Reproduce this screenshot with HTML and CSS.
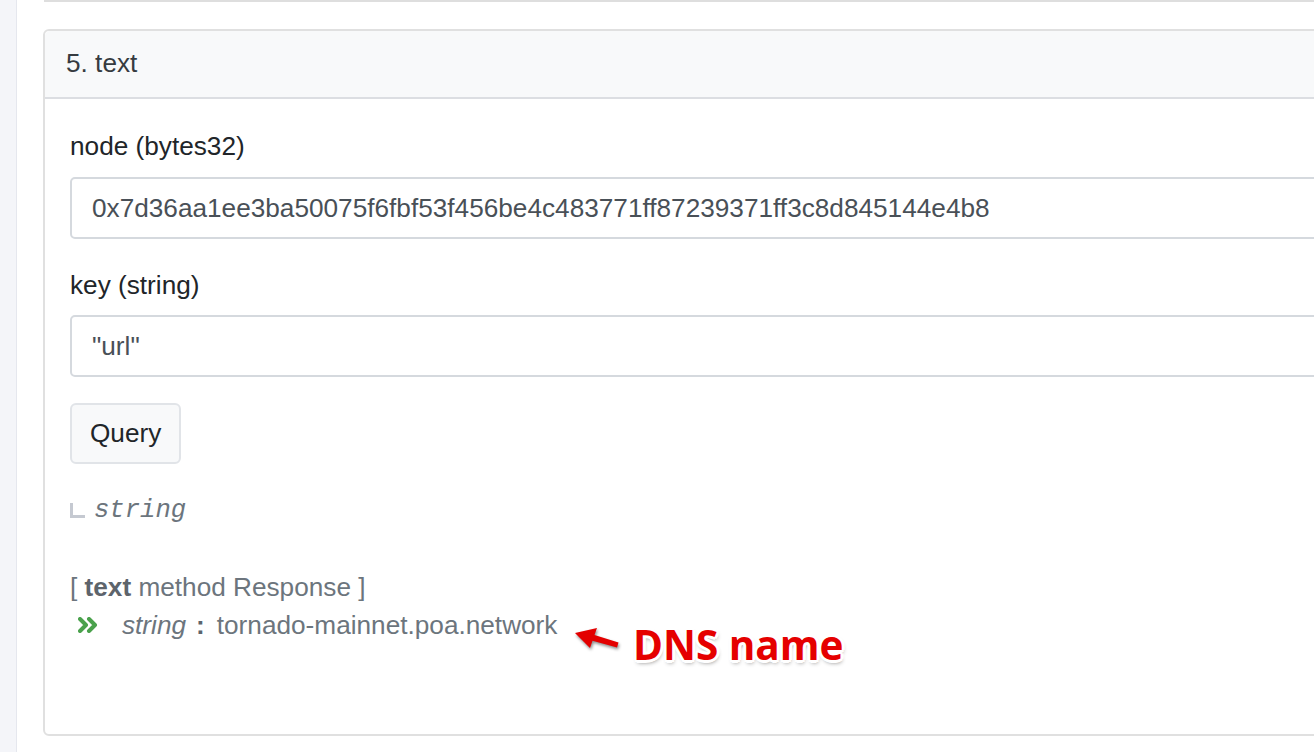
FILE: index.html
```html
<!DOCTYPE html>
<html lang="en">
<head>
<meta charset="utf-8">
<title>text</title>
<link rel="stylesheet" href="styles.css">
</head>
<body>
<div class="page">
  <aside class="side"></aside>
  <main class="main">
    <div class="prev-card"></div>
    <section class="card">
      <header class="card-head">5. text</header>
      <div class="card-body">
        <div class="group">
          <label class="lbl">node (bytes32)</label>
          <div class="input">0x7d36aa1ee3ba50075f6fbf53f456be4c483771ff87239371ff3c8d845144e4b8</div>
        </div>
        <div class="group">
          <label class="lbl">key (string)</label>
          <div class="input">"url"</div>
        </div>
        <button class="btn">Query</button>
        <div class="ret"><span class="ell"></span><i class="mono">string</i></div>
        <div class="resp">
          <div class="resp-title">[ <b>text</b> method Response ]</div>
          <div class="resp-line">
            <svg class="chev" width="22" height="16" viewBox="0 0 22 16"><path d="M2 2 L8 8 L2 14 M11 2 L17 8 L11 14" fill="none" stroke="#4aa14c" stroke-width="4" stroke-linecap="round" stroke-linejoin="round"/></svg>
            <i class="rtype">string</i><b class="colon">:</b><span class="rval">tornado-mainnet.poa.network</span>
          </div>
        </div>
      </div>
    </section>
  </main>
  <svg class="arrow" width="60" height="40" viewBox="0 0 60 40"><polygon points="4,13 26,8 23.5,15 47.5,22.5 46,27.5 21.5,20.8 19,28" fill="#e30000"/></svg>
  <span class="note">DNS name</span>
</div>
</body>
</html>
```

FILE: styles.css
```css
html, body {
  margin: 0;
  padding: 0;
  background: #ffffff;
  overflow: hidden;
}
.page {
  position: relative;
  display: flex;
  width: 1314px;
  height: 752px;
  overflow: hidden;
  font-family: "Liberation Sans", Arial, sans-serif;
  font-size: 26.2px;
  line-height: 38.4px;
  color: #212529;
}
.side {
  flex: 0 0 16px;
  background: #f4f5f9;
  border-right: 1px solid #e5e7ee;
}
.main {
  flex: 1 1 auto;
  padding-left: 26px;
  min-width: 0;
}
.prev-card {
  width: 1400px;
  height: 0;
  margin-left: 1px;
  border-bottom: 2px solid #dedede;
}
.card {
  width: 1400px;
  margin-top: 27px;
  border: 2px solid #e0e0e0;
  border-radius: 6px;
  background: #fff;
}
.card-head {
  padding: 13px 21px 15px;
  background: #f8f9fa;
  border-bottom: 2px solid #dcdee2;
  border-radius: 5px 5px 0 0;
  color: #363b40;
}
.card-body {
  padding: 28px 25px 90px;
}
.group {
  margin-bottom: 27px;
}
.lbl {
  display: block;
  margin-bottom: 11px;
  color: #212529;
}
.input {
  box-sizing: border-box;
  height: 62px;
  padding: 10px 20px;
  border: 2px solid #d5d9de;
  border-radius: 5px;
  color: #495057;
  white-space: nowrap;
}
.btn {
  display: block;
  box-sizing: border-box;
  height: 61px;
  padding: 0 18px;
  margin: -1px 0 0;
  background: #f8f9fa;
  border: 2px solid #e1e4e8;
  border-radius: 6px;
  font-family: inherit;
  font-size: 26.2px;
  color: #212529;
}
.ret {
  display: flex;
  align-items: center;
  margin-top: 28px;
  height: 38.4px;
}
.ell {
  display: inline-block;
  width: 12px;
  height: 12px;
  margin-right: 9px;
  margin-top: -1px;
  border-left: 3px solid #c5c9d1;
  border-bottom: 3px solid #c5c9d1;
}
.mono {
  font-family: "Liberation Mono", "DejaVu Sans Mono", monospace;
  font-style: italic;
  font-size: 25.6px;
  color: #6c757d;
}
.resp {
  margin-top: 37px;
  color: #6c757d;
}
.resp-title b {
  color: #5d646b;
}
.resp-line {
  display: flex;
  align-items: baseline;
}
.chev {
  margin: 0 22px 0 8px;
  align-self: center;
}
.rtype {
  margin-right: 10px;
}
.colon {
  margin-right: 12px;
  color: #5d646b;
}
.arrow {
  position: absolute;
  left: 571px;
  top: 620px;
  filter: drop-shadow(1px 2px 1.5px rgba(0, 0, 0, 0.45));
}
.note {
  position: absolute;
  left: 633px;
  top: 625px;
  font-family: "Open Sans", "Noto Sans", sans-serif;
  font-weight: 700;
  font-size: 40.5px;
  line-height: 1;
  color: #e50000;
  text-shadow:
    -2px -2px 0 #fff, 2px -2px 0 #fff, -2px 2px 0 #fff, 2px 2px 0 #fff,
    0 -3px 0 #fff, 0 3px 0 #fff, -3px 0 0 #fff, 3px 0 0 #fff,
    1px 3px 4px rgba(0, 0, 0, 0.45);
}
```
